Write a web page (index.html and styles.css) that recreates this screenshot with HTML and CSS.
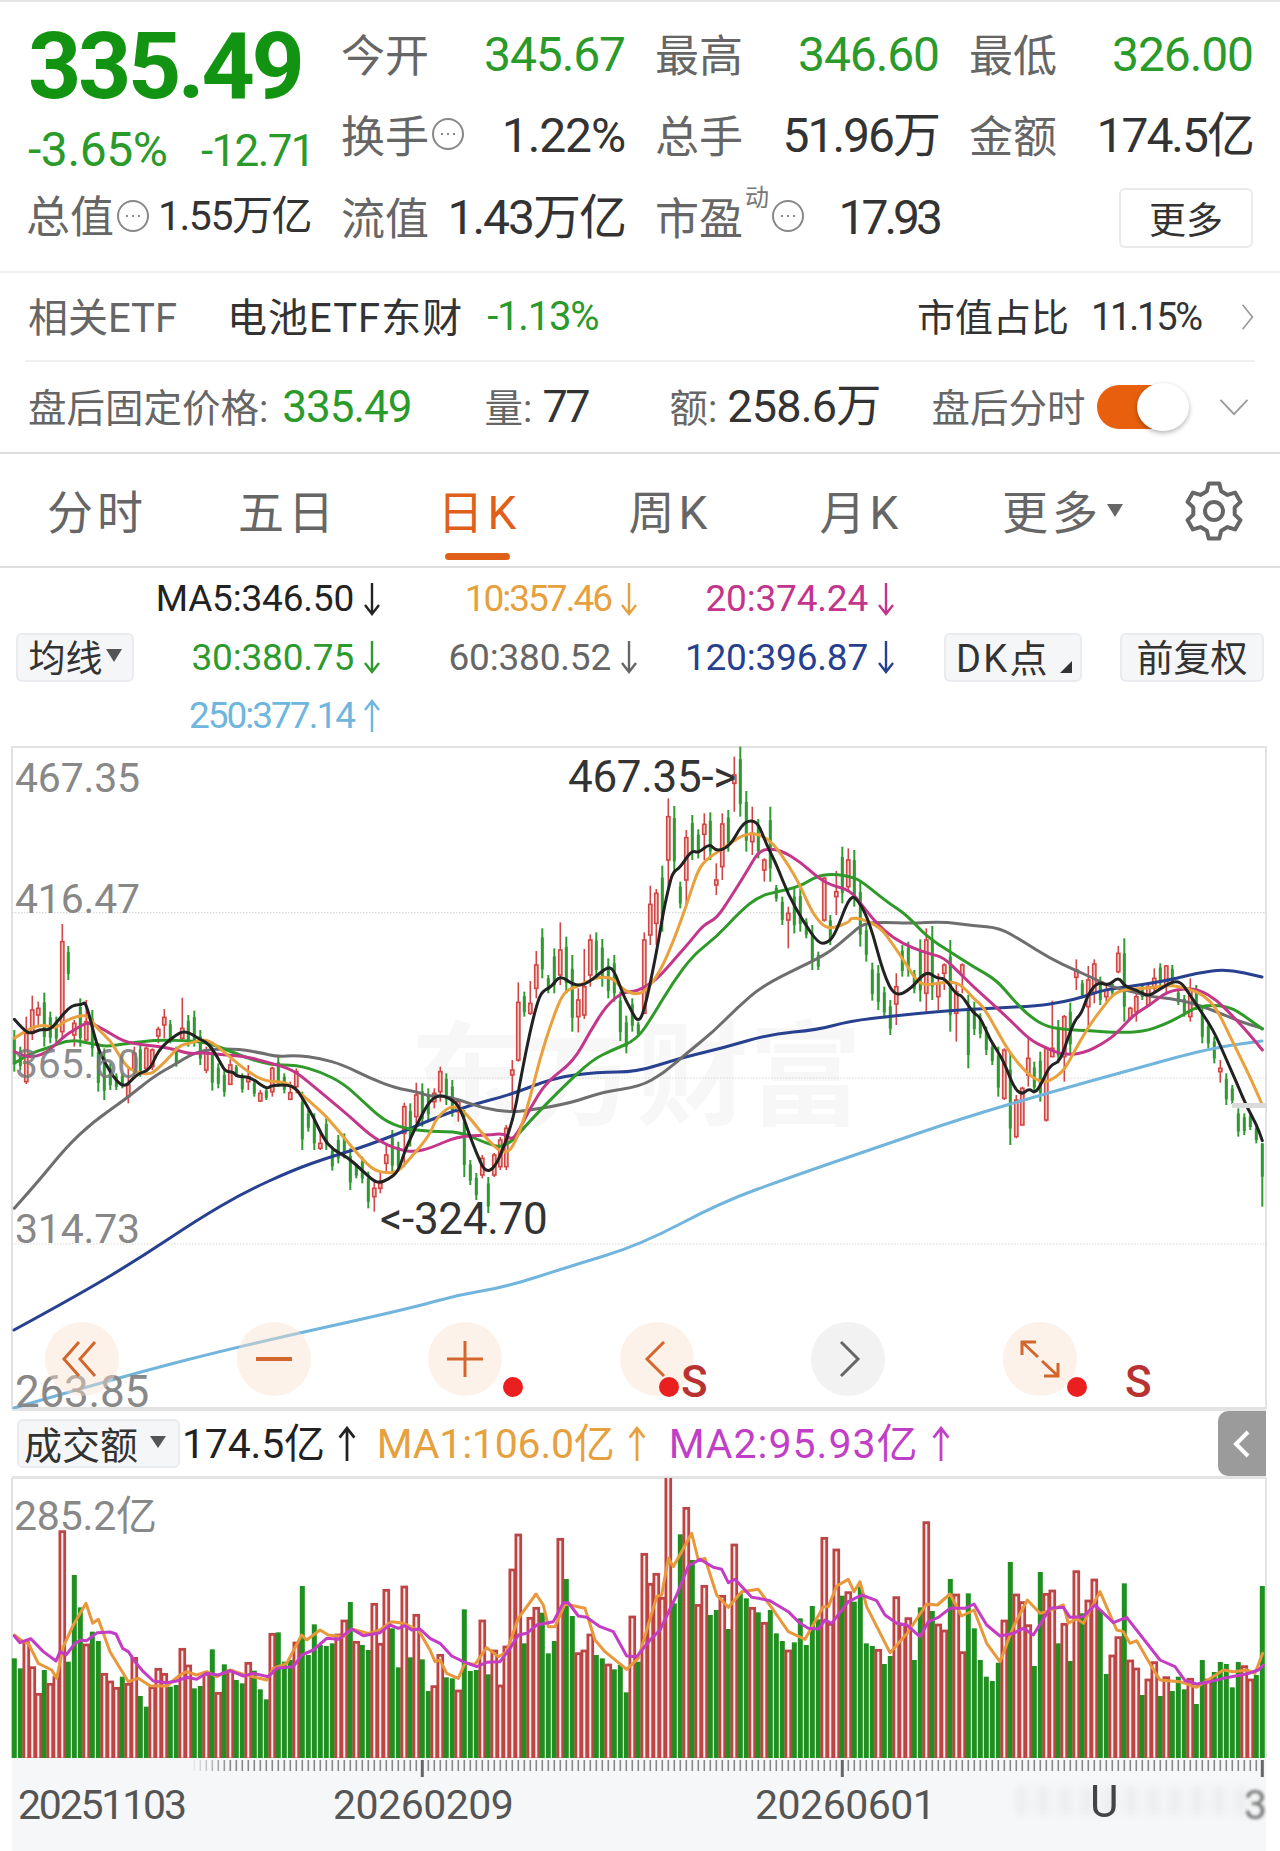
FILE: index.html
```html
<!DOCTYPE html>
<html lang="zh-CN">

<head>
  <meta charset="UTF-8">
  <meta name="viewport" content="width=device-width, initial-scale=1.0">
  <title>日K行情</title>

  <link rel="stylesheet" href="styles.css">
</head>

<body>
  <svg class="sprite">
    <symbol id="arr-down" viewBox="0 0 20 34"><path d="M10 1V32M3 23L10 32L17 23"/></symbol>
    <symbol id="arr-up" viewBox="0 0 20 34"><path d="M10 33V2M3 11L10 2L17 11"/></symbol>
    <symbol id="info" viewBox="0 0 34 34"><circle cx="17" cy="17" r="15"/><path class="dots" d="M10 17h2M16 17h2M22 17h2"/></symbol>
  </svg>

  <div class="quote">
    <div class="quote-left">
      <div class="price">335.49</div>
      <div class="change"><span class="change-pct">-3.65%</span><span class="change-abs">-12.71</span></div>
      <div class="cap"><span class="lbl">总值</span><svg class="info"><use href="#info"/></svg><span class="cap-val">1.55万亿</span></div>
    </div>
    <div class="stats">
      <div class="stat"><span class="lbl">今开</span><span class="val up">345.67</span></div>
      <div class="stat"><span class="lbl">最高</span><span class="val up">346.60</span></div>
      <div class="stat"><span class="lbl">最低</span><span class="val up">326.00</span></div>
      <div class="stat"><span class="lbl">换手<svg class="info"><use href="#info"/></svg></span><span class="val">1.22%</span></div>
      <div class="stat"><span class="lbl">总手</span><span class="val val-cn">51.96万</span></div>
      <div class="stat"><span class="lbl">金额</span><span class="val val-cn">174.5亿</span></div>
      <div class="stat"><span class="lbl">流值</span><span class="val val-cn">1.43万亿</span></div>
      <div class="stat"><span class="lbl">市盈<sup class="dyn">动</sup><svg class="info"><use href="#info"/></svg></span><span class="val val-tight">17.93</span></div>
      <div class="stat stat-more"><button class="more">更多</button></div>
    </div>
  </div>

  <div class="etf">
    <span class="lbl etf-name">相关ETF</span>
    <span class="etf-fund">电池ETF东财</span>
    <span class="etf-pct">-1.13%</span>
    <span class="etf-share">市值占比</span>
    <span class="etf-share-val">11.15%</span>
    <svg class="chev-r" viewBox="0 0 16 34"><path d="M2 2L14 17L2 32"/></svg>
  </div>

  <div class="after">
    <span class="lbl after-fixed">盘后固定价格:</span><span class="after-price">335.49</span>
    <span class="lbl after-qty">量:</span><span class="after-val after-77">77</span>
    <span class="lbl after-amt">额:</span><span class="after-val">258.6万</span>
    <span class="lbl after-time">盘后分时</span>
    <div class="toggle"><i class="knob"></i></div>
    <svg class="chev-d" viewBox="0 0 34 20"><path d="M2 2L17 18L32 2"/></svg>
  </div>

  <div class="tabs">
    <span class="tab">分时</span>
    <span class="tab">五日</span>
    <span class="tab active">日K</span>
    <span class="tab">周K</span>
    <span class="tab">月K</span>
    <span class="tab tab-more">更多<i class="caret"></i></span>
    <svg class="gear" viewBox="0 0 60 60"><path d="M24.7 2.5L35.3 2.5L37.2 10.3L43.5 13.9L51.1 11.6L56.5 20.9L50.7 26.4L50.7 33.6L56.5 39.1L51.1 48.4L43.5 46.1L37.2 49.7L35.3 57.5L24.7 57.5L22.8 49.7L16.5 46.1L8.9 48.4L3.5 39.1L9.3 33.6L9.3 26.4L3.5 20.9L8.9 11.6L16.5 13.9L22.8 10.3Z"/><circle cx="30" cy="30" r="9"/></svg>
  </div>

  <div class="ma-panel">
    <button class="chip chip-ma">均线<i class="caret-s"></i></button>
    <div class="ma-rows">
      <div class="ma-row">
        <span class="ma c-black">MA5:346.50<svg class="arr"><use href="#arr-down"/></svg></span>
        <span class="ma ma-tight c-orange">10:357.46<svg class="arr"><use href="#arr-down"/></svg></span>
        <span class="ma c-pink">20:374.24<svg class="arr"><use href="#arr-down"/></svg></span>
      </div>
      <div class="ma-row">
        <span class="ma c-green">30:380.75<svg class="arr"><use href="#arr-down"/></svg></span>
        <span class="ma c-gray">60:380.52<svg class="arr"><use href="#arr-down"/></svg></span>
        <span class="ma c-navy">120:396.87<svg class="arr"><use href="#arr-down"/></svg></span>
      </div>
      <div class="ma-row">
        <span class="ma ma-tight c-sky">250:377.14<svg class="arr"><use href="#arr-up"/></svg></span>
      </div>
    </div>
    <button class="chip chip-dk">DK点<i class="corner"></i></button>
    <button class="chip chip-fq">前复权</button>
  </div>

  <div class="kline">
    <div class="watermark">东方财富</div>
    <svg id="priceChart" class="chart" viewBox="0 746 1280 663"></svg>

    <span class="axis axis-1">467.35</span>
    <span class="axis axis-2">416.47</span>
    <span class="axis axis-3">365.60</span>
    <span class="axis axis-4">314.73</span>
    <span class="axis axis-5">263.85</span>
    <span class="note note-high">467.35-&gt;</span>
    <span class="note note-low">&lt;-324.70</span>

    <div class="kbtns">
      <div class="kbtn"><svg viewBox="0 0 74 74"><path d="M34 20L19 37L34 54M50 20L35 37L50 54"/></svg></div>
      <div class="kbtn"><svg viewBox="0 0 74 74"><path class="thick" d="M19 37H55"/></svg></div>
      <div class="kbtn"><svg viewBox="0 0 74 74"><path d="M19 37H55M37 19V55"/></svg></div>
      <div class="kbtn"><svg viewBox="0 0 74 74"><path d="M44 20L27 37L44 54"/></svg></div>
      <div class="kbtn kbtn-off"><svg viewBox="0 0 74 74"><path d="M30 20L47 37L30 54"/></svg></div>
      <div class="kbtn"><svg viewBox="0 0 74 74"><path d="M19 33V20H33M19 20L35 35M55 41V54H41M55 54L39 39"/></svg></div>
    </div>
    <i class="dot dot-1"></i>
    <i class="dot dot-2"></i>
    <i class="dot dot-3"></i>
    <span class="sig sig-1">S</span>
    <span class="sig sig-2">S</span>
  </div>

  <div class="vol-head">
    <button class="chip chip-vol">成交额<i class="caret-v"></i></button>
    <span class="vol-ma c-black">174.5亿<svg class="arr"><use href="#arr-up"/></svg></span>
    <span class="vol-ma c-orange">MA1:106.0亿<svg class="arr"><use href="#arr-up"/></svg></span>
    <span class="vol-ma vol-ma2 c-violet">MA2:95.93亿<svg class="arr"><use href="#arr-up"/></svg></span>
    <div class="fold"><svg viewBox="0 0 20 30"><path d="M16 3L4 15L16 27"/></svg></div>
  </div>

  <div class="vol">
    <svg id="volChart" class="chart" viewBox="0 1478 1280 280"></svg>
    <span class="axis axis-vol">285.2亿</span>
  </div>

  <div class="dates">
    <svg id="ticks" class="ticks" viewBox="12 1758 1254 22"></svg>
    <span class="date date-1">20251103</span>
    <span class="date date-2">20260209</span>
    <span class="date date-3">20260601</span>
    <div class="date-blur"></div>
    <span class="date-u">U</span>
    <span class="date date-4">3</span>
  </div>

  <script src="chart.js"></script>
</body>

</html>
```

FILE: styles.css
```css
* {
  box-sizing: border-box;
}
body {
  margin: 0;
  width: 1280px;
  background: #fff;
  font-family: Roboto, "Noto Sans CJK SC", sans-serif;
  color: #333;
}
.sprite {
  position: absolute;
  width: 0;
  height: 0;
}
button {
  font-family: inherit;
}

/* 顶部报价 */
.quote {
  display: flex;
  height: 273px;
  border-top: 2px solid #e4e4e4;
  border-bottom: 2px solid #eee;
  padding-top: 12px;
}
.quote-left {
  width: 341px;
  padding-left: 28px;
}
.price {
  height: 106px;
  font-size: 93px;
  line-height: 106px;
  font-weight: 700;
  letter-spacing: -3.4px;
  color: #129412;
}
.change {
  display: flex;
  justify-content: space-between;
  align-items: baseline;
  width: 286px;
  height: 60px;
  font-size: 44px;
  line-height: 60px;
  letter-spacing: -1px;
  color: #2a9a2a;
}
.change-pct {
  font-size: 48px;
  letter-spacing: -.4px;
}
.change-abs {
  letter-spacing: -1.6px;
}
.cap {
  display: flex;
  align-items: center;
  height: 72px;
  margin-left: -2px;
}
.cap-val {
  margin-left: 8px;
  font-size: 41px;
  line-height: 50px;
  letter-spacing: -1.5px;
  white-space: nowrap;
}
.lbl {
  display: inline-flex;
  align-items: center;
  margin-bottom: 4px;
  color: #666;
  font-size: 44px;
  white-space: nowrap;
}
.info {
  width: 34px;
  height: 34px;
  margin-left: 2px;
  fill: none;
  stroke: #888;
  stroke-width: 2;
}
.info .dots {
  stroke-width: 2.4;
}
.stats {
  display: grid;
  grid-template-columns: repeat(3, 284px);
  grid-auto-rows: 81.5px;
  column-gap: 30px;
}
.stat {
  display: flex;
  align-items: center;
  justify-content: space-between;
}
.stat-more {
  justify-content: flex-end;
}
.val {
  font-size: 48px;
  line-height: 56px;
  letter-spacing: -1.1px;
  white-space: nowrap;
}
.val-cn {
  letter-spacing: -2px;
}
.val-tight {
  letter-spacing: -4px;
}
.up {
  color: #2a9a2a;
}
.dyn {
  align-self: flex-start;
  margin: 0 0 0 2px;
  font-size: 24px;
  line-height: 28px;
  color: #777;
}
.more {
  width: 134px;
  height: 60px;
  padding: 0;
  background: #fff;
  border: 2px solid #eaeaea;
  border-radius: 6px;
  font-size: 37px;
  color: #333;
}

/* ETF 和盘后 */
.etf,
.after {
  display: flex;
  align-items: center;
}
.etf {
  height: 89px;
  margin: 0 25px;
  border-bottom: 2px solid #f0f0f0;
}
.etf-name {
  margin-left: 3px;
  font-size: 40px;
}
.etf-fund {
  margin-left: 50px;
  margin-bottom: 4px;
  font-size: 40px;
  letter-spacing: 1px;
}
.etf-pct {
  margin-left: 24px;
  font-size: 40px;
  letter-spacing: -1.2px;
  color: #2a9a2a;
}
.etf-share {
  margin-left: auto;
  margin-bottom: 4px;
  font-size: 38px;
}
.etf-share-val {
  margin-left: 22px;
  font-size: 38px;
  letter-spacing: -2.2px;
}
.chev-r {
  width: 15px;
  height: 28px;
  margin: 0 0 0 39px;
  fill: none;
  stroke: #999;
  stroke-width: 2;
}
.after {
  height: 92px;
  padding-left: 28px;
  border-bottom: 2px solid #ddd;
}
.after .lbl {
  font-size: 38.5px;
}
.after-price {
  margin-left: 14px;
  font-size: 44px;
  letter-spacing: -1px;
  color: #2a9a2a;
}
.after-qty {
  margin-left: 73px;
}
.after-val {
  margin-left: 10px;
  font-size: 45px;
  line-height: 54px;
  letter-spacing: -.8px;
}
.after-77 {
  width: 127px;
  letter-spacing: -2.5px;
}
.after-time {
  margin-left: 51px;
}
.toggle {
  position: relative;
  width: 78px;
  height: 44px;
  margin-left: 12px;
  background: #e8600e;
  border-radius: 22px;
}
.knob {
  position: absolute;
  left: 40px;
  top: -2px;
  width: 52px;
  height: 48px;
  background: #fff;
  border-radius: 50%;
  box-shadow: 0 2px 5px rgba(0, 0, 0, .3);
}
.chev-d {
  width: 32px;
  height: 18px;
  margin-left: 43px;
  fill: none;
  stroke: #999;
  stroke-width: 2;
}

/* 周期切换 */
.tabs {
  display: flex;
  align-items: center;
  height: 114px;
  padding-bottom: 3px;
  border-bottom: 2px solid #ddd;
}
.tab {
  position: relative;
  width: 191px;
  padding-left: 3px;
  text-align: center;
  font-size: 46px;
  letter-spacing: 4px;
  color: #666;
}
.tab-more {
  padding-left: 24px;
}
.tab.active {
  color: #e0601a;
}
.tab.active::after {
  content: "";
  position: absolute;
  left: 50%;
  bottom: -18px;
  width: 65px;
  height: 7px;
  margin-left: -33px;
  background: #e0601a;
  border-radius: 4px;
}
.caret {
  display: inline-block;
  margin-left: 5px;
  border: 8px solid transparent;
  border-top: 13px solid #666;
  border-bottom: 0;
  vertical-align: 12px;
}
.gear {
  width: 60px;
  height: 60px;
  margin: 4px 0 0 38px;
  fill: none;
  stroke: #666;
  stroke-width: 4;
  stroke-linejoin: round;
}

/* 均线 */
.ma-panel {
  display: flex;
  align-items: center;
  height: 178px;
  padding-left: 16px;
}
.chip {
  display: inline-flex;
  align-items: center;
  justify-content: center;
  height: 49px;
  padding: 0 0 3px;
  background: #f5f6f8;
  border: 2px solid #eaebee;
  border-radius: 6px;
  font-size: 37px;
  color: #333;
}
.chip-ma {
  width: 118px;
}
.caret-s {
  margin-left: 3px;
  border: 8px solid transparent;
  border-top: 13px solid #555;
  border-bottom: 0;
}
.chip-dk {
  position: relative;
  width: 138px;
  margin-left: 48px;
  justify-content: flex-start;
  padding-left: 10px;
  font-size: 38px;
  letter-spacing: 2.4px;
}
.corner {
  position: absolute;
  right: 8px;
  bottom: 7px;
  border-left: 12px solid transparent;
  border-bottom: 12px solid #333;
}
.chip-fq {
  width: 144px;
  margin-left: 38px;
}
.ma-rows {
  width: 762px;
}
.ma-row {
  display: grid;
  grid-template-columns: 248px 257px 257px;
  height: 58.5px;
  align-items: center;
}
.ma {
  display: flex;
  align-items: center;
  justify-content: flex-end;
  font-size: 37px;
  letter-spacing: -.2px;
  white-space: nowrap;
}
.ma-tight {
  letter-spacing: -2px;
}
.arr {
  width: 20px;
  height: 34px;
  margin-left: 8px;
  fill: none;
  stroke: currentColor;
  stroke-width: 2.4;
}
.c-black { color: #222; }
.c-orange { color: #e6a03e; }
.c-pink { color: #c3358c; }
.c-green { color: #2d9a2d; }
.c-gray { color: #666; }
.c-navy { color: #26408f; }
.c-sky { color: #6fb6de; }
.c-violet { color: #c13fc6; }

/* K线 */
.kline {
  position: relative;
  height: 663px;
}
.chart {
  display: block;
  position: relative;
  width: 1280px;
  height: 100%;
}
.watermark {
  position: absolute;
  left: 410px;
  top: 275px;
  font-size: 113px;
  line-height: 1;
  font-weight: 700;
  color: #f7f7f7;
  white-space: nowrap;
}
.axis {
  position: absolute;
  left: 15px;
  font-size: 41px;
  line-height: 34px;
  letter-spacing: -.2px;
  color: #888;
}
.axis-1 { top: 15px; }
.axis-2 { top: 136px; }
.axis-3 { top: 301px; color: rgba(120, 120, 120, .85); }
.axis-4 { top: 466px; }
.axis-5 { top: 629px; font-size: 44px; }
.frame {
  fill: none;
  stroke: #e2e2e2;
  stroke-width: 2;
}
.grid {
  stroke: #d8d8d8;
  stroke-width: 1.2;
  stroke-dasharray: 1.5 1.5;
}
.wick-up {
  stroke: #d04545;
  stroke-width: 1.6;
}
.wick-down {
  stroke: #2e9b2e;
  stroke-width: 2;
}
.body-up {
  fill: #f4c4bd;
  stroke: #d04545;
  stroke-width: 1.6;
}
.body-down {
  fill: #2e9b2e;
}
.ma-sky,
.ma-navy,
.ma-gray,
.ma-green,
.ma-pink,
.ma-orange,
.ma-black,
.vol-orange,
.vol-violet {
  fill: none;
  stroke-width: 3;
  stroke-linejoin: round;
  stroke-linecap: round;
}
.ma-sky { stroke: #72b5dc; }
.ma-navy { stroke: #27408f; }
.ma-gray { stroke: #6e6e6e; }
.ma-green { stroke: #2f9a2a; }
.ma-pink { stroke: #c4368a; }
.ma-orange { stroke: #e8a13c; }
.ma-black { stroke: #222; }
.patch {
  fill: #dadada;
}
.note {
  position: absolute;
  font-size: 44px;
  line-height: 48px;
  letter-spacing: -.3px;
  color: #333;
}
.note-high { left: 568px; top: 7px; }
.note-low { left: 380px; top: 449px; }
.kbtns {
  position: absolute;
  left: 45px;
  top: 576px;
  display: flex;
  gap: 117.5px;
}
.kbtn {
  width: 74px;
  height: 74px;
  background: rgba(250, 225, 205, .42);
  border-radius: 50%;
}
.kbtn svg {
  display: block;
  fill: none;
  stroke: #d2662c;
  stroke-width: 3;
}
.kbtn .thick {
  stroke-width: 4;
}
.kbtn-off {
  background: rgba(225, 225, 225, .42);
}
.kbtn-off svg {
  stroke: #666;
}
.dot {
  position: absolute;
  top: 631px;
  width: 20px;
  height: 20px;
  background: #ea2020;
  border-radius: 50%;
}
.dot-1 { left: 503px; }
.dot-2 { left: 659px; }
.dot-3 { left: 1067px; }
.sig {
  position: absolute;
  top: 609px;
  font-size: 44px;
  line-height: 54px;
  font-weight: 500;
  color: #b83232;
}
.sig-1 { left: 681px; }
.sig-2 { left: 1125px; }

/* 成交额 */
.vol-head {
  display: flex;
  align-items: center;
  height: 69px;
  margin: 0 14px 0 12px;
  padding-left: 5px;
  border-top: 2px solid #e4e4e4;
  border-bottom: 2px solid #e4e4e4;
}
.chip-vol {
  width: 163px;
  justify-content: flex-start;
  padding-left: 5px;
  font-size: 38px;
}
.caret-v {
  margin-left: 12px;
  border: 8px solid transparent;
  border-top: 12px solid #555;
  border-bottom: 0;
}
.vol-ma {
  display: flex;
  align-items: center;
  margin-left: 2px;
  font-size: 41px;
  line-height: 50px;
  letter-spacing: -.2px;
  white-space: nowrap;
}
.vol-ma + .vol-ma {
  margin-left: 18px;
}
.vol-ma + .vol-ma2 {
  margin-left: 20px;
  letter-spacing: 1px;
}
.vol-ma .arr {
  width: 24px;
  height: 36px;
  margin-left: 10px;
  stroke-width: 2.6;
}
.fold {
  display: flex;
  align-items: center;
  justify-content: center;
  width: 48px;
  height: 65px;
  margin-left: auto;
  background: #9b9b9b;
  border-radius: 10px 0 0 10px;
}
.fold svg {
  width: 20px;
  height: 30px;
  fill: none;
  stroke: #fff;
  stroke-width: 4;
}
.vol {
  position: relative;
  height: 280px;
}
.axis-vol {
  left: 14px;
  top: 21px;
}
.vol-down {
  fill: #1f8f1f;
}
.vol-up {
  fill: #fdeae6;
  stroke: #bd4444;
  stroke-width: 2.8;
}
.vol-orange { stroke: #e8983a; }
.vol-violet { stroke: #c43cc4; }

/* 日期 */
.dates {
  position: relative;
  height: 93px;
  margin: 0 14px 0 12px;
  background: #f6f7f9;
}
.ticks {
  display: block;
  width: 1254px;
  height: 22px;
}
.tick {
  stroke: #888;
  stroke-width: 1.6;
}
.tick-major {
  stroke: #666;
  stroke-width: 3;
}
.date {
  position: absolute;
  top: 23px;
  font-size: 41px;
  line-height: 48px;
  letter-spacing: -.5px;
  color: #555;
}
.date-1 { left: 6px; letter-spacing: -2.2px; }
.date-2 { left: 321px; }
.date-3 { left: 743px; }
.date-4 {
  left: 1232px;
  color: #777;
  filter: blur(1.4px);
}
.date-blur {
  position: absolute;
  left: 1003px;
  top: 28px;
  width: 245px;
  height: 30px;
  background: repeating-linear-gradient(90deg, #eceded 0 12px, #f4f5f6 12px 22px);
  filter: blur(3px);
  opacity: .8;
}
.date-u {
  position: absolute;
  left: 1078px;
  top: 19px;
  font-size: 44px;
  line-height: 50px;
  color: #444;
  filter: blur(.6px);
}
```

FILE: chart.js
```js
const NS = "http://www.w3.org/2000/svg";

function add(parent, name, attrs) {
  const node = document.createElementNS(NS, name);
  for (const key in attrs) node.setAttribute(key, attrs[key]);
  parent.appendChild(node);
  return node;
}

// 取样坐标是放大3倍量的，这里换算回页面坐标
function pts(ox, oy, list) {
  const out = [];
  for (let i = 0; i < list.length; i += 2) out.push([ox + list[i] / 3, oy + list[i + 1] / 3]);
  return out;
}

function smooth(p) {
  let d = `M${p[0][0]} ${p[0][1]}`;
  for (let i = 1; i < p.length - 1; i++) {
    const mx = (p[i][0] + p[i + 1][0]) / 2;
    const my = (p[i][1] + p[i + 1][1]) / 2;
    d += `Q${p[i][0]} ${p[i][1]} ${mx} ${my}`;
  }
  const last = p[p.length - 1];
  return d + `L${last[0]} ${last[1]}`;
}

const barX = (i) => 14.3 + 6 * i;

/* ---- K线 ---- */
const candles =
  "G390,515 G440,510 R350,552,400,545 R287,420,330,400 R305,380,325,345 G278,440 G335,430 G350,430 R72,420,125,395 G138,240 " +
  "R360,440,370,405 G295,440 R300,425,365,420 G330,470 G430,575 G445,600 G490,570 G520,570 G520,565 R500,610,555,590 " +
  "R440,530,460,510 G430,530 R440,515,445,505 R445,510,450,500 R380,430,388,408 R327,415,352,375 G360,430 G440,500 R293,420,385,415 G345,440 " +
  "G332,440 G390,495 R440,520,450,510 G440,572 G490,565 G510,590 R478,555,495,553 G495,530 G520,578 R495,570,530,545 " +
  "G540,590 R570,605,580,603 G565,600 R500,590,505,575 G470,560 G520,580 R545,600,578,598 R505,580,515,560 G575,750 G630,695 " +
  "G640,750 R690,750,730,745 G655,750 G740,812 G705,790 G700,775 G745,870 G790,835 G770,850 G815,925 " +
  "R840,935,865,890 R818,880,850,865 R735,820,765,790 G690,820 G725,815 R608,800,620,700 G610,740 R548,680,585,650 G550,680 G565,660";

const candles2 =
  "R1030,1090,1045,1070 R965,1070,980,1040 G985,1080 G1005,1115 R1060,1130,1070,1100 G1095,1296 G1245,1320 G1284,1365 R1230,1300,1240,1290 G1296,1404 " +
  "R1224,1296,1230,1290 R1176,1275,1185,1265 R1140,1275,1150,1265 R945,1100,975,990 R712,950,772,945 G740,815 R708,810,775,805 R618,760,660,730 G550,700 G690,745 " +
  "G610,745 R532,720,615,690 G575,745 G630,860 R730,862,765,815 R612,822,725,810 R568,725,585,690 G562,700 G582,725 G640,760 " +
  "G630,770 G740,888 G812,925 G760,860 G830,875 R562,800,585,805 R422,600,478,570 R432,600,445,535 G362,560 R160,430,215,345 " +
  "G183,385 G410,490 R255,480,278,405 G210,345 G253,340 R205,345,238,268 G202,345 R355,450,405,420 R205,405,237,365 G195,320 " +
  "R35,200,90,115 G5,215 G138,320 R185,330,265,290 G222,340 R340,410,345,375 G185,410 G420,470 G455,540 R485,610,505,525 " +
  "G430,565 G430,560 G520,580 G540,675 G620,675 R395,530,400,525 G510,600 R378,510,440,455 G305,475 R310,440,345,425";

const candles3 =
  "G-90,80 G0,200 G130,245 G248,362 G255,390 G320,415 G360,465 R280,435,320,372 G195,290 G185,290 " +
  "G270,340 G178,365 R145,400,180,340 G138,360 R280,390,310,350 R250,330,255,280 G180,455 R310,485,335,400 R250,340,255,285 G345,565 " +
  "G365,465 G400,475 G440,525 G490,555 G500,650 R505,660,510,655 G520,795 R645,775,660,770 R620,735,625,735 R470,620,535,585 " +
  "G545,640 G515,665 R500,725,505,720 R362,530,505,530 G420,550 R405,605,410,530 G368,520 R238,330,270,292 G300,355 R258,440,300,380 " +
  "R238,370,252,340 G290,375 R310,365,330,350 G305,345 R198,280,220,275 G175,425 R380,420,385,415 R330,425,350,395 G310,360 R310,380,320,375 " +
  "R265,340,295,325 G250,320 R255,345,258,315 G255,320 G330,375 G345,410 R295,425,330,410 G315,390 G380,490 G425,505 " +
  "G470,550 R540,608,565,575 G580,675 G615,672 G685,770 G700,765 G700,750 G735,790 G790,980,790,890";

const priceLines = [
  // 250日
  { cls: "ma-sky", p: [[14, 1408], [122, 1376.5], [245, 1345], [408, 1309], [457, 1295], [506, 1287], [571, 1266], [640, 1245], [722, 1202], [791, 1177], [869, 1150], [966, 1117], [1048, 1093], [1130, 1070], [1211, 1048], [1262, 1041]] },
  // 120日
  { cls: "ma-navy", p: [[14, 1330], [82, 1293], [143, 1256], [197, 1220], [243, 1193], [293, 1170], [330, 1157], [360, 1148], [400, 1133], [430, 1120], [470, 1105], [510, 1095], [553, 1078], [597, 1072], [637, 1072], [680, 1058], [723, 1048], [770, 1034], [817, 1030], [850, 1021], [893, 1016], [943, 1011], [993, 1008], [1037, 1006], [1063, 1002], [1083, 997], [1103, 990], [1133, 986], [1170, 980], [1197, 973], [1227, 969], [1262, 977]] },
  // 60日
  { cls: "ma-gray", p: [
    ...pts(10, 900, [13,925,80,850,170,740,250,665,350,595,430,530,500,490,545,462,600,447,690,447,760,460,800,470,860,466,930,475,1000,495,1080,535,1160,565,1220,575,1260,590]),
    ...pts(430, 745, [30,1050,90,1065,160,1090,240,1102,300,1095,420,1075,520,1040,630,1025,700,985,770,925,850,860,920,790,1000,720,1145,650,1200,620,1260,570]),
    ...pts(850, 880, [40,130,100,127,180,130,280,125,370,137,450,143,520,185,600,235,670,268,720,290,780,320,850,335,900,350,960,355,1030,370,1100,395,1170,425,1237,445])
  ] },
  // 30日
  { cls: "ma-green", p: [
    ...pts(10, 900, [13,490,60,460,110,445,180,418,250,432,290,440,350,430,440,420,520,422,580,425,640,445,700,470,780,495,860,495,930,515,1000,550,1060,605,1120,660,1180,685,1260,695]),
    ...pts(430, 745, [93,1160,167,1195,228,1210,302,1125,400,1025,486,945,547,915,620,885,670,810,730,710,790,630,860,575,930,500,985,455,1040,440,1110,425,1165,390,1220,388,1260,395]),
    ...pts(850, 880, [30,0,110,65,170,105,230,170,300,215,370,260,440,300,490,360,540,410,590,440,650,450,720,452,800,458,880,455,940,435,990,410,1040,380,1100,375,1150,385,1200,420,1237,447])
  ] },
  // 20日
  { cls: "ma-pink", p: [
    ...pts(10, 900, [13,455,50,475,110,460,160,410,200,385,235,365,285,390,340,425,400,435,450,440,500,450,540,462,580,458,640,465,700,468,780,488,850,510,900,550,960,600,1020,650,1080,705,1130,735,1180,752,1215,755,1260,745]),
    ...pts(430, 745, [80,1175,170,1170,225,1165,250,1190,300,1090,350,1010,430,950,480,860,530,780,580,740,620,740,680,705,740,635,780,590,820,540,860,520,900,460,950,380,985,320,1020,310,1060,320,1110,350,1160,395,1200,420,1260,435]),
    ...pts(850, 880, [40,80,75,125,130,175,190,205,240,222,280,232,330,280,370,320,420,365,480,420,540,480,590,505,640,525,700,520,760,490,800,460,850,405,900,375,950,335,1010,325,1050,330,1100,360,1150,410,1200,465,1237,510])
  ] },
  // 10日
  { cls: "ma-orange", p: [
    ...pts(10, 900, [13,415,50,390,90,375,115,378,135,385,170,360,200,350,235,345,260,385,300,420,330,470,350,500,375,515,420,525,450,500,480,470,510,435,540,430,585,415,625,440,670,480,720,520,770,545,825,545,860,570,900,605,950,650,1000,710,1050,770,1090,810,1130,820,1165,815,1200,775,1260,705]),
    ...pts(430, 745, [20,1115,81,1070,167,1180,228,1235,265,1175,300,1060,330,940,365,830,400,740,440,725,480,705,515,695,550,700,580,735,620,750,650,735,690,680,730,590,770,480,800,385,825,345,880,310,940,268,985,265,1030,295,1075,360,1110,420,1145,500,1180,545,1210,550,1260,530]),
    ...pts(850, 880, [0,115,30,115,90,140,130,195,170,255,205,310,240,315,290,305,330,310,370,355,400,380,440,450,480,520,530,580,570,605,595,605,640,575,670,520,715,440,760,380,800,330,885,325,960,315,1015,325,1060,345,1100,385,1150,490,1200,590,1237,675])
  ] },
  // 5日
  { cls: "ma-black", p: [
    ...pts(10, 900, [13,358,45,395,65,400,90,388,120,390,150,355,175,325,195,314,215,314,228,305,260,435,285,490,320,545,345,560,365,540,385,520,420,510,445,450,490,410,525,390,570,418,595,430,625,475,645,515,670,515,680,530,720,530,770,568,785,555,850,555,875,590,910,650,940,715,970,750,1010,770,1050,805,1090,843,1110,848,1135,838,1165,815,1185,750,1225,665,1260,600]),
    ...pts(430, 745, [30,1050,60,1060,90,1085,125,1190,177,1311,245,1150,275,985,300,860,320,780,335,740,365,725,390,690,430,720,465,720,510,685,530,668,550,670,580,750,600,790,625,835,645,790,680,620,700,500,720,410,730,380,750,368,785,315,805,325,838,295,860,320,900,303,935,240,960,225,985,235,1010,300,1040,360,1075,450,1120,530,1165,595,1190,595,1215,570,1260,450]),
    ...pts(850, 880, [25,60,60,130,100,280,135,352,185,325,228,272,260,295,285,295,320,345,335,345,370,400,390,410,420,480,460,540,490,620,515,645,537,625,555,640,575,610,600,555,630,545,655,470,675,420,695,400,715,340,745,305,775,318,805,290,825,320,860,330,895,350,925,330,985,295,1020,345,1050,390,1090,450,1130,540,1165,620,1190,680,1220,735,1237,782])
  ] }
];

function drawCandle(svg, spec, i, oy) {
  const up = spec[0] === "R";
  const n = spec.slice(1).split(",").map(Number);
  const hi = oy + n[0] / 3;
  const lo = oy + n[1] / 3;
  const x = barX(i);
  add(svg, "line", { class: up ? "wick-up" : "wick-down", x1: x, x2: x, y1: hi, y2: lo });
  if (up) {
    const top = oy + n[2] / 3;
    const bot = oy + n[3] / 3;
    add(svg, "rect", { class: "body-up", x: x - 1.6, y: Math.min(top, bot), width: 3.2, height: Math.abs(bot - top) });
  } else {
    const len = lo - hi;
    const top = n.length > 2 ? oy + n[2] / 3 : hi + len * 0.18;
    const bot = n.length > 2 ? oy + n[3] / 3 : lo - len * 0.18;
    add(svg, "rect", { class: "body-down", x: x - 1.5, y: top, width: 3, height: bot - top });
  }
}

function drawPrice() {
  const svg = document.querySelector("#priceChart");
  add(svg, "rect", { class: "frame", x: 12, y: 747, width: 1254, height: 661 });
  for (const y of [912.7, 1078, 1244]) {
    add(svg, "line", { class: "grid", x1: 12, x2: 1266, y1: y, y2: y });
  }
  let i = 0;
  [[candles, 900], [candles2, 745], [candles3, 880]].forEach(([list, oy]) => {
    for (const spec of list.split(" ")) drawCandle(svg, spec, i++, oy);
  });
  for (const line of priceLines) {
    add(svg, "path", { class: line.cls, d: smooth(line.p) });
  }
  add(svg, "rect", { class: "patch", x: 1232, y: 1103, width: 35, height: 5 });
}

/* ---- 成交额 ---- */
const volTops = [
  535,565,485,560,640,570,610,590,152,545,285,382,492,455,483,580,603,622,590,610,
  532,648,680,620,565,580,620,615,505,555,625,618,580,508,637,553,570,600,610,547,
  572,628,658,460,457,545,540,486,318,525,433,495,498,490,462,420,366,484,495,510,
  370,490,328,445,562,318,532,403,538,633,
  617,523,592,595,630,388,573,570,420,583,510,615,498,267,162,490,412,382,398,520,
  483,175,297,408,518,510,462,525,535,552,568,555,637,408,545,220,310,280,352,-60,
  370,163,82,240,373,316,405,390,346,447,192,340,355,382,397,427,390,460,483,510,
  487,415,495,378,418,172,430,207,347,335,
  365,320,490,498,508,552,528,350,430,413,540,382,125,393,432,450,297,342,515,340,
  445,540,590,603,548,420,246,342,365,434,558,276,340,330,490,430,543,272,400,360,
  297,390,582,525,470,310,540,564,645,597,545,648,590,633,590,628,595,672,540,597,
  576,546,552,622,546,557,597,585,318
];
const volColors =
  "GGRRRGRRRG" + "GGRGGRRRGR" + "RGGRRRGGRR" + "GGRGRGRGGR" + "GGGRGGGRGG" + "GGGGRRGRGG" + "RRRGGRGRGG" +
  "RRGGRGGGRG" + "RRRRRGRRGG" + "GRGGRRRGGR" + "GGGRGRRRRR" + "GGRGRRGGRG" + "RGGRGRGGGR" + "GGGGGRRRGR" +
  "GGGGRGGRRR" + "GGRGRRGRRG" + "GGGGGRGRRR" + "GGRRGRGRGR" + "RGGRRGRRGR" + "RGRGGGRGGR" + "GGGGGRRGG";

const volOrange = [
  ...pts(10, 1480, [13,465,40,485,55,490,85,550,125,570,140,595,160,500,190,435,228,370,248,430,265,418,300,515,355,605,385,595,420,617,470,618,510,585,530,575,560,585,590,575,620,590,660,570,700,583,770,600,790,565,830,550,875,465,890,480,930,450,955,465,1000,470,1025,447,1075,460,1110,450,1145,425,1180,430,1225,450,1260,510]),
  ...pts(430, 1480, [15,545,30,540,50,580,85,595,105,550,135,553,170,503,205,530,230,515,265,415,318,342,340,375,355,440,375,440,405,372,465,385,495,480,525,515,590,568,625,535,680,350,695,345,715,235,730,260,785,160,805,240,825,235,860,345,895,382,935,335,985,328,1030,390,1075,455,1125,478,1180,380,1195,380,1220,318,1255,298]),
  ...pts(850, 1480, [12,335,30,305,50,380,120,518,170,462,230,372,262,375,300,342,335,408,372,390,410,490,450,545,490,440,532,360,570,400,600,392,640,375,655,430,680,415,700,430,750,335,800,450,820,455,840,490,860,482,905,560,930,600,990,605,1040,622,1120,570,1150,575,1190,570,1215,580,1238,520])
];
const volViolet = [
  ...pts(10, 1480, [13,468,30,488,62,476,100,515,138,543,150,515,168,525,195,490,212,480,230,482,262,458,300,456,318,462,338,505,355,515,375,545,400,575,430,603,470,608,500,603,530,592,560,598,590,580,625,585,660,572,700,588,730,580,775,590,800,565,850,560,875,525,910,510,950,475,985,478,1025,447,1060,467,1110,458,1140,435,1165,445,1185,437,1205,450,1230,447,1260,475]),
  ...pts(430, 1480, [30,490,65,528,100,545,140,560,170,547,210,545,240,505,265,465,290,460,320,435,370,425,400,368,415,368,445,408,470,412,510,440,550,455,590,528,620,530,660,480,690,450,740,345,775,258,810,238,850,262,875,268,895,308,915,298,965,352,985,355,1020,362,1075,395,1110,430,1135,445,1165,447,1185,420,1205,430,1255,365]),
  ...pts(850, 1480, [35,345,80,362,105,405,140,430,170,435,210,470,235,425,265,412,300,385,345,385,372,372,410,435,450,468,490,460,520,445,550,465,600,385,640,382,660,412,700,410,735,375,790,428,830,412,930,540,975,560,1005,602,1040,612,1080,605,1120,595,1190,582,1225,570,1240,555])
];

function drawVolume() {
  const svg = document.querySelector("#volChart");
  add(svg, "rect", { class: "frame", x: 12, y: 1478, width: 1254, height: 290 });
  const baseY = 1758;
  // 先画绿柱，空心红柱压在上面
  volTops.forEach((top, i) => {
    if (volColors[i] === "R") return;
    const y = 1480 + top / 3;
    add(svg, "rect", { class: "vol-down", x: barX(i) - 2.5, y, width: 5, height: baseY - y });
  });
  volTops.forEach((top, i) => {
    if (volColors[i] !== "R") return;
    const y = 1480 + top / 3;
    add(svg, "rect", { class: "vol-up", x: barX(i) - 2.4, y: y + 1, width: 4.8, height: baseY - y });
  });
  add(svg, "polyline", { class: "vol-orange", points: volOrange.join(" ") });
  add(svg, "polyline", { class: "vol-violet", points: volViolet.join(" ") });
}

/* ---- 时间刻度 ---- */
function drawTicks() {
  const svg = document.querySelector("#ticks");
  for (let i = 30; i < 209; i++) {
    const x = barX(i);
    const major = i === 68 || i === 138 || i === 208;
    const fade = i < 36 ? (i - 29) / 7 : 1;
    const tick = add(svg, "line", { class: major ? "tick-major" : "tick", x1: x, x2: x, y1: 1760, y2: major ? 1777 : 1771 });
    if (fade < 1) tick.setAttribute("opacity", fade);
  }
}

drawPrice();
drawVolume();
drawTicks();
```
